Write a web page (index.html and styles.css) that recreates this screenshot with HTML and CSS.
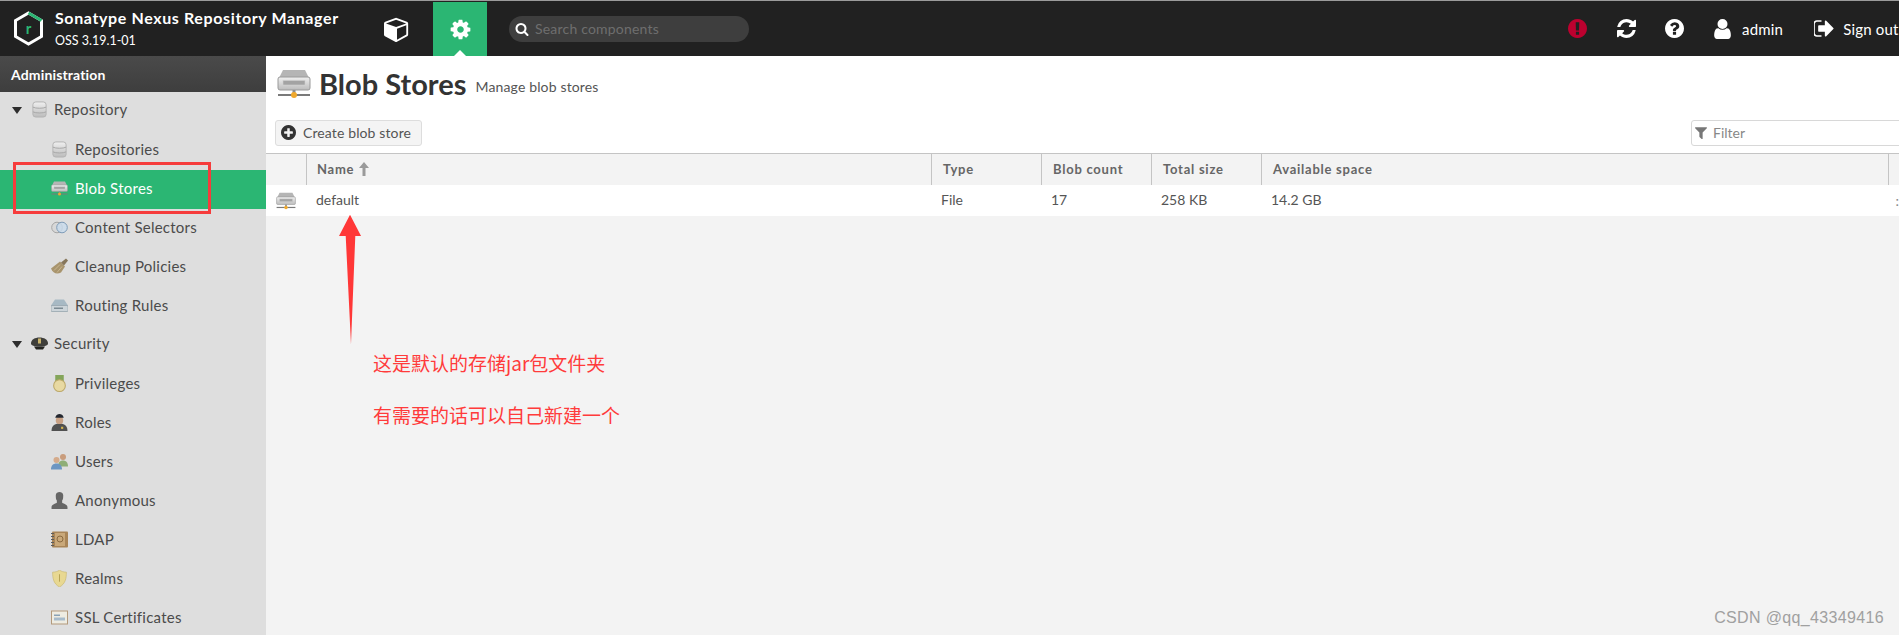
FILE: index.html
```html
<!DOCTYPE html>
<html lang="en">
<head>
<meta charset="utf-8">
<title>Blob Stores - Nexus Repository Manager</title>
<link rel="stylesheet" href="styles.css">
</head>
<body>
<svg class="defs" width="0" height="0" aria-hidden="true">
  <defs>
    <linearGradient id="silver" x1="0" y1="0" x2="0" y2="1"><stop offset="0" stop-color="#efefef"/><stop offset="1" stop-color="#bcbcbc"/></linearGradient>
    <symbol id="i-drive" viewBox="0 0 34 30">
      <path d="M6 1h22l4 8H2z" fill="#b5b5b5"/>
      <rect x="1" y="8" width="32" height="13" rx="2" fill="url(#silver)" stroke="#9a9a9a"/>
      <rect x="6" y="11.500" width="22" height="4.500" fill="#a3a3a3" stroke="#cfcfcf" stroke-width=".6"/>
      <rect x="15.500" y="21" width="3" height="5" fill="#8f8f8f"/>
      <rect x="1" y="25" width="32" height="2" fill="#7a7a7a"/>
      <circle cx="17" cy="26" r="3" fill="#f0a92e"/>
    </symbol>
    <symbol id="i-db" viewBox="0 0 16 18">
      <rect x="1" y="1" width="14" height="16" rx="3" fill="url(#silver)" stroke="#b2b2b2"/>
      <path d="M1 6.500c3 1.600 11 1.600 14 0M1 11.500c3 1.600 11 1.600 14 0" fill="none" stroke="#a5a5a5"/>
    </symbol>
    <symbol id="i-selector" viewBox="0 0 17 12">
      <circle cx="6" cy="6" r="5.300" fill="#d8d8d8" stroke="#a5a5a5"/>
      <circle cx="11" cy="6" r="5.300" fill="#c8dbec" fill-opacity=".8" stroke="#7f9cb8"/>
    </symbol>
    <symbol id="i-broom" viewBox="0 0 17 16">
      <path d="M0 10 L9 3 L14 8 L10 14 C6 16 2 15 0 10z" fill="#a8946d"/>
      <path d="M3 12 L9 6 M6 14 L11 8" stroke="#c9b68f" fill="none"/>
      <path d="M10 4 L15 0 L17 2 L13 7z" fill="#86765a"/>
    </symbol>
    <symbol id="i-router" viewBox="0 0 17 12">
      <path d="M4 0h9l4 6v5a1 1 0 0 1-1 1H1a1 1 0 0 1-1-1V6z" fill="#a7b9c4"/>
      <rect x="0" y="6" width="17" height="6" rx="1" fill="#ccd4d9" stroke="#8b9aa3" stroke-width=".6"/>
      <rect x="3" y="8" width="9" height="1.500" fill="#7b8a93"/>
    </symbol>
    <symbol id="i-cap" viewBox="0 0 17 12">
      <path d="M0 6c0-4 4-6 8.500-6S17 2 17 6c0 2-3 3-8.500 3S0 8 0 6z" fill="#3e3e3a"/>
      <rect x="7" y="1" width="3" height="5" fill="#c9b36b"/>
      <path d="M3 9h11l-2 3H5z" fill="#23231f"/>
    </symbol>
    <symbol id="i-medal" viewBox="0 0 12 16">
      <rect x="2" y="0" width="8" height="6" fill="#84a55a"/>
      <circle cx="6" cy="10" r="5.500" fill="#e8d9a2" stroke="#bda868"/>
    </symbol>
    <symbol id="i-officer" viewBox="0 0 15 16">
      <path d="M0 16c0-5 3-7 7.500-7S15 11 15 16z" fill="#505050"/>
      <circle cx="7.500" cy="6" r="3.500" fill="#c9a184"/>
      <path d="M3.500 3.500C4 1 6 0 7.500 0S11 1 11.500 3.500z" fill="#23272f"/>
      <rect x="9" y="12" width="2" height="2" fill="#d8b84d"/>
    </symbol>
    <symbol id="i-users" viewBox="0 0 17 16">
      <circle cx="12" cy="3.500" r="3" fill="#c99d7d"/>
      <path d="M7 13c0-4 2-6 5-6s5 2 5 6z" fill="#8eae77"/>
      <circle cx="5.500" cy="6.500" r="3" fill="#d5ab8b"/>
      <path d="M0 16c0-4 2-6 5.500-6S11 12 11 16z" fill="#6c96c2"/>
    </symbol>
    <symbol id="i-anon" viewBox="0 0 15 16">
      <path d="M0 16v-2c0-2 3-3 5-4V8C4 7 4 5 4 3c0-2 2-3 3.500-3S11 1 11 3c0 2 0 4-1 5v2c2 1 5 2 5 4v2z" fill="#666"/>
    </symbol>
    <symbol id="i-book" viewBox="0 0 17 16">
      <rect x="1" y="0" width="16" height="16" rx="1" fill="#a98557"/>
      <rect x="4" y="1.500" width="10" height="13" fill="#c9a879"/>
      <circle cx="9" cy="7.500" r="3" fill="none" stroke="#8a6a40"/>
      <path d="M0 2h3M0 5h3M0 8h3M0 11h3M0 14h3" stroke="#5d5d5d"/>
    </symbol>
    <symbol id="i-shield" viewBox="0 0 13 16">
      <path d="M6.500 0C8 1.500 11 2 13 2c0 6-1 11-6.500 14C1 13 0 8 0 2c2 0 5-.5 6.500-2z" fill="#e8d892" stroke="#c8b670" stroke-width=".6"/>
      <path d="M6.500 4v7" stroke="#b8a455"/>
    </symbol>
    <symbol id="i-cert" viewBox="0 0 17 14">
      <rect x=".5" y=".5" width="16" height="13" fill="#eeece2" stroke="#b39a7c"/>
      <rect x="3" y="4" width="6" height="1.500" fill="#8aa2b5"/>
      <rect x="3" y="7" width="11" height="3" fill="#a7bbcb"/>
    </symbol>
  </defs>
</svg>

<div class="topline"></div>
<header class="topbar">
  <div class="brand">
    <svg class="logo" viewBox="0 0 31 35" aria-hidden="true">
      <path d="M15.500 2 L28.500 9.500 V25.500 L15.500 33 L2.500 25.500 V9.500 Z" fill="none" stroke="#fff" stroke-width="3"/>
      <path d="M15.500 2 L28.500 9.500" fill="none" stroke="#2bb673" stroke-width="3"/>
      <text x="15.500" y="23" text-anchor="middle" class="logo-r">r</text>
    </svg>
    <div class="brand-text">
      <div class="brand-name">Sonatype Nexus Repository Manager</div>
      <div class="brand-version">OSS 3.19.1-01</div>
    </div>
  </div>
  <div class="nav-btn nav-browse">
    <svg class="ico-cube" viewBox="0 0 1792 1792"><path fill="#fff" d="M896 1629l640-349v-636l-640 233v752zm-64-864l698-254-698-254-698 254zm832-252v768q0 35-18 65t-49 47l-704 384q-28 16-61 16t-61-16l-704-384q-31-17-49-47t-18-65v-768q0-40 23-73t61-49l704-256q22-8 44-8t44 8l704 256q38 16 61 49t23 73z"/></svg>
  </div>
  <div class="nav-btn nav-active">
    <svg class="ico-gear" viewBox="0 0 1792 1792"><path fill="#fff" d="M1152 896q0-106-75-181t-181-75-181 75-75 181 75 181 181 75 181-75 75-181zm512-109v222q0 12-8 23t-20 13l-185 28q-19 54-39 91 35 50 107 138 10 12 10 25t-9 23q-27 37-99 108t-94 71q-12 0-26-9l-138-108q-44 23-91 38-16 136-29 186-7 28-36 28h-222q-14 0-24.500-8.500t-11.500-21.500l-28-184q-49-16-90-37l-141 107q-10 9-25 9-14 0-25-11-126-114-165-168-7-10-7-23 0-12 8-23 15-21 51-66.500t54-70.500q-27-50-41-99l-183-27q-13-2-21-12.500t-8-23.500v-222q0-12 8-23t19-13l186-28q14-46 39-92-40-57-107-138-10-12-10-24 0-10 9-23 26-36 98.500-107.500t94.500-71.500q13 0 26 10l138 107q44-23 91-38 16-136 29-186 7-28 36-28h222q14 0 24.500 8.500t11.500 21.500l28 184q49 16 90 37l142-107q9-9 24-9 13 0 25 10 129 119 165 170 7 8 7 22 0 12-8 23-15 21-51 66.500t-54 70.500q26 50 41 98l183 28q13 2 21 12.500t8 23.500z"/></svg>
  </div>
  <div class="search">
    <svg class="ico-search" viewBox="0 0 1792 1792"><path fill="#fff" d="M1216 832q0-185-131.500-316.500t-316.500-131.500-316.500 131.500-131.500 316.500 131.500 316.500 316.500 131.500 316.500-131.500 131.500-316.500zm512 832q0 52-38 90t-90 38q-54 0-90-38l-343-342q-179 124-399 124-143 0-273.500-55.500t-225-150-150-225-55.500-273.500 55.500-273.500 150-225 225-150 273.500-55.500 273.500 55.500 225 150 150 225 55.500 273.500q0 220-124 399l343 343q37 37 37 90z"/></svg>
    <span class="search-text">Search components</span>
  </div>
  <div class="top-actions">
    <svg class="ico-top" viewBox="128 128 1536 1536"><path fill="#bc012f" d="M896 128q209 0 385.500 103t279.500 279.500 103 385.500-103 385.500-279.500 279.500-385.500 103-385.500-103-279.500-279.500-103-385.500 103-385.500 279.500-279.500 385.500-103zm128 1247v-190q0-14-9-23.500t-22-9.500h-192q-13 0-23 10t-10 23v190q0 13 10 23t23 10h192q13 0 22-9.500t9-23.500zm-2-344l18-621q0-12-10-18-10-8-24-8h-220q-14 0-24 8-10 6-10 18l17 621q0 10 10 17.500t24 7.500h185q14 0 23.500-7.500t10.500-17.500z"/></svg>
    <svg class="ico-top" viewBox="0 0 1536 1536"><path fill="#fff" d="M1511 928q0 5-1 7-64 268-268 434.500t-478 166.500q-146 0-282.500-55t-243.500-157l-129 129q-19 19-45 19t-45-19-19-45v-448q0-26 19-45t45-19h448q26 0 45 19t19 45-19 45l-137 137q71 66 161 102t187 36q134 0 250-65t186-179q11-17 53-117 8-23 30-23h192q13 0 22.500 9.500t9.500 22.500zm25-800v448q0 26-19 45t-45 19h-448q-26 0-45-19t-19-45 19-45l138-138q-148-137-349-137-134 0-250 65t-186 179q-11 17-53 117-8 23-30 23h-199q-13 0-22.500-9.500t-9.500-22.500v-7q65-268 270-434.500t480-166.500q146 0 284 55.500t245 156.500l130-129q19-19 45-19t45 19 19 45z"/></svg>
    <svg class="ico-top" viewBox="128 128 1536 1536"><path fill="#fff" d="M1024 1376v-192q0-14-9-23t-23-9h-192q-14 0-23 9t-9 23v192q0 14 9 23t23 9h192q14 0 23-9t9-23zm256-672q0-88-55.500-163t-138.500-116-170-41q-243 0-371 213-15 24 8 42l132 100q7 6 19 6 16 0 25-12 53-68 86-92 34-24 86-24 48 0 85.500 26t37.500 59q0 38-20 61t-68 45q-63 28-115.500 86.500t-52.500 125.500v36q0 14 9 23t23 9h192q14 0 23-9t9-23q0-19 21.500-49.500t54.500-49.500q32-18 49-28.500t46-35 44.500-48 28-60.500 12.500-81zm384 192q0 209-103 385.500t-279.500 279.500-385.500 103-385.500-103-279.500-279.500-103-385.500 103-385.500 279.500-279.500 385.500-103 385.500 103 279.500 279.500 103 385.500z"/></svg>
    <div class="top-user">
      <svg class="ico-user" viewBox="256 128 1280 1536"><path fill="#fff" d="M1536 1399q0 109-62.500 187t-150.500 78h-854q-88 0-150.500-78t-62.500-187q0-85 8.500-160.500t31.500-152 58.500-131 94-89 134.500-34.500q131 128 313 128t313-128q76 0 134.500 34.500t94 89 58.500 131 31.500 152 8.500 160.500zm-256-887q0 159-112.500 271.500t-271.500 112.500-271.500-112.500-112.500-271.500 112.500-271.500 271.500-112.500 271.500 112.500 112.500 271.500z"/></svg>
      <span class="top-label">admin</span>
    </div>
    <div class="top-signout">
      <svg class="ico-signout" viewBox="128 256 1536 1280"><path fill="#fff" d="M704 1440q0 4 1 20t.5 26.500-3 23.500-10 19.500-20.500 6.500h-320q-119 0-203.500-84.500t-84.500-203.500v-704q0-119 84.500-203.500t203.500-84.500h320q13 0 22.500 9.500t9.500 22.500q0 4 1 20t.5 26.500-3 23.500-10 19.500-20.500 6.500h-320q-66 0-113 47t-47 113v704q0 66 47 113t113 47h312l11.500 1 11.500 3 8 5.500 7 9 2 13.500zm928-544q0 26-19 45l-544 544q-19 19-45 19t-45-19-19-45v-288h-448q-26 0-45-19t-19-45v-384q0-26 19-45t45-19h448v-288q0-26 19-45t45-19 45 19l544 544q19 19 19 45z"/></svg>
      <span class="top-label">Sign out</span>
    </div>
  </div>
</header>

<div class="main">
  <aside class="sidebar">
    <div class="side-title">Administration</div>
    <div class="side-row side-group"><span class="caret"></span><svg class="side-ico"><use href="#i-db"/></svg><span>Repository</span></div>
    <div class="side-row side-sub"><svg class="side-ico"><use href="#i-db"/></svg><span>Repositories</span></div>
    <div class="side-row side-sub side-active"><svg class="side-ico"><use href="#i-drive"/></svg><span>Blob Stores</span></div>
    <div class="side-row side-sub"><svg class="side-ico"><use href="#i-selector"/></svg><span>Content Selectors</span></div>
    <div class="side-row side-sub"><svg class="side-ico"><use href="#i-broom"/></svg><span>Cleanup Policies</span></div>
    <div class="side-row side-sub"><svg class="side-ico"><use href="#i-router"/></svg><span>Routing Rules</span></div>
    <div class="side-row side-group"><span class="caret"></span><svg class="side-ico"><use href="#i-cap"/></svg><span>Security</span></div>
    <div class="side-row side-sub"><svg class="side-ico"><use href="#i-medal"/></svg><span>Privileges</span></div>
    <div class="side-row side-sub"><svg class="side-ico"><use href="#i-officer"/></svg><span>Roles</span></div>
    <div class="side-row side-sub"><svg class="side-ico"><use href="#i-users"/></svg><span>Users</span></div>
    <div class="side-row side-sub"><svg class="side-ico"><use href="#i-anon"/></svg><span>Anonymous</span></div>
    <div class="side-row side-sub"><svg class="side-ico"><use href="#i-book"/></svg><span>LDAP</span></div>
    <div class="side-row side-sub"><svg class="side-ico"><use href="#i-shield"/></svg><span>Realms</span></div>
    <div class="side-row side-sub"><svg class="side-ico"><use href="#i-cert"/></svg><span>SSL Certificates</span></div>
  </aside>

  <main class="content">
    <div class="page-head">
      <div class="title-row">
        <svg class="title-ico"><use href="#i-drive"/></svg>
        <h1 class="title">Blob Stores</h1>
        <span class="subtitle">Manage blob stores</span>
      </div>
      <div class="toolbar">
        <div class="btn">
          <svg class="ico-plus" viewBox="128 128 1536 1536"><path fill="#333" d="M1344 960v-128q0-26-19-45t-45-19h-256v-256q0-26-19-45t-45-19h-128q-26 0-45 19t-19 45v256h-256q-26 0-45 19t-19 45v128q0 26 19 45t45 19h256v256q0 26 19 45t45 19h128q26 0 45-19t19-45v-256h256q26 0 45-19t19-45zm320-64q0 209-103 385.500t-279.500 279.500-385.500 103-385.500-103-279.500-279.500-103-385.500 103-385.500 279.500-279.500 385.500-103 385.500 103 279.500 279.500 103 385.500z"/></svg>
          <span>Create blob store</span>
        </div>
        <div class="filter">
          <svg class="ico-filter" viewBox="190 256 1412 1344"><path fill="#777" d="M1595 295q17 41-14 70l-493 493v742q0 42-39 59-13 5-25 5-27 0-45-19l-256-256q-19-19-19-45v-486l-493-493q-31-29-14-70 17-39 59-39h1280q42 0 59 39z"/></svg>
          <span>Filter</span>
        </div>
      </div>
    </div>
    <div class="grid-row grid-head">
      <div class="cell"></div>
      <div class="cell cell-sep cell-name">Name
        <svg class="ico-sort" viewBox="0 0 10 14"><path fill="#9a9a9a" d="M5 0l5 6H6.500v8h-3V6H0z"/></svg>
      </div>
      <div class="cell cell-sep">Type</div>
      <div class="cell cell-sep">Blob count</div>
      <div class="cell cell-sep">Total size</div>
      <div class="cell cell-sep">Available space</div>
      <div class="cell cell-sep"></div>
    </div>
    <div class="grid-row grid-body">
      <div class="cell cell-ico"><svg class="row-ico"><use href="#i-drive"/></svg></div>
      <div class="cell">default</div>
      <div class="cell">File</div>
      <div class="cell">17</div>
      <div class="cell">258 KB</div>
      <div class="cell">14.2 GB</div>
      <div class="cell cell-end">:</div>
    </div>
  </main>
</div>

<div class="mark-box"></div>
<svg class="mark-arrow" viewBox="0 0 24 137" aria-hidden="true"><path fill="#ff3737" d="M11.500 0L23 22h-6L12.500 135 7 22H0z"/></svg>
<div class="mark-text" lang="zh-CN">
  <p>这是默认的存储jar包文件夹</p>
  <p>有需要的话可以自己新建一个</p>
</div>
<div class="watermark">CSDN @qq_43349416</div>
</body>
</html>
```
FILE: styles.css
```css
* { box-sizing: border-box; }
html, body { margin: 0; height: 635px; overflow: hidden; }
body { position: relative; background: #f3f3f3; font-family: Lato, "Liberation Sans", sans-serif; color: #444; display: flex; flex-direction: column; }
.defs { position: absolute; }

.topline { height: 1px; background: #9b9b9b; flex: none; }
.topbar { height: 55px; flex: none; background: #212121; color: #fff; display: flex; align-items: stretch; overflow: hidden; }
.brand { width: 375px; flex: none; display: flex; align-items: center; padding-left: 13px; gap: 11px; }
.logo { width: 31px; height: 35px; flex: none; }
.logo-r { font: 700 15px Lato, sans-serif; fill: #2bb673; }
.brand-name { font-size: 16px; font-weight: 700; letter-spacing: .62px; line-height: 20px; white-space: nowrap; }
.brand-version { font-size: 12.5px; line-height: 18px; margin-top: 4px; white-space: nowrap; }
.nav-btn { width: 54px; flex: none; display: flex; align-items: center; justify-content: center; position: relative; }
.nav-browse { margin-left: -5px; margin-right: 9px; }
.nav-active { background: #2bb673; margin-top: 1px; }
.nav-active::after { content: ""; position: absolute; left: 50%; bottom: 0; margin-left: -6px; border: 6px solid transparent; border-top: 0; border-bottom-color: #fff; }
.ico-cube { width: 26px; height: 26px; }
.ico-gear { width: 23px; height: 23px; }
.search { width: 240px; height: 26px; align-self: center; margin-left: 22px; border-radius: 13px; background: #3e3e3e; display: flex; align-items: center; padding-left: 6px; gap: 6px; flex: none; }
.ico-search { width: 14px; height: 14px; }
.search-text { font-size: 14px; color: #6e6e6e; letter-spacing: .2px; }
.top-actions { margin-left: 819px; display: flex; align-items: center; gap: 29.5px; flex: none; }
.ico-top { width: 19px; height: 19px; flex: none; display: block; }
.top-user { display: flex; align-items: center; gap: 11.5px; }
.ico-user { width: 17px; height: 20px; flex: none; display: block; }
.top-signout { display: flex; align-items: center; gap: 9px; margin-left: 1.500px; }
.ico-signout { width: 20px; height: 17px; flex: none; }
.top-label { font-size: 15px; letter-spacing: .2px; white-space: nowrap; }

.main { flex: 1; min-height: 0; display: flex; }
.sidebar { width: 266px; flex: none; background: #dedede; overflow: hidden; }
.side-title { height: 36px; padding-left: 11px; display: flex; align-items: center; font-size: 14px; font-weight: 700; letter-spacing: .15px; color: #fff; background: linear-gradient(#4a4a4a, #3e3e3e); }
.side-row { height: 39px; padding-bottom: 3px; display: flex; align-items: center; font-size: 15px; letter-spacing: .25px; color: #4b4b4b; white-space: nowrap; }
.side-group { padding-left: 12px; padding-bottom: 5px; }
.side-group .side-ico { margin-left: 9px; margin-right: 6px; }
.side-sub { padding-left: 51px; }
.side-sub .side-ico { margin-right: 7px; }
.side-ico { width: 17px; height: 17px; flex: none; display: block; }
.side-active { background: #2bb673; color: #fff; }
.caret { width: 0; height: 0; border-left: 5px solid transparent; border-right: 5px solid transparent; border-top: 7px solid #2d2d2d; flex: none; margin-top: 2px; }

.content { flex: 1; min-width: 0; display: flex; flex-direction: column; overflow: hidden; }
.page-head { height: 97px; flex: none; background: #fff; padding: 10px 0 0 9px; }
.title-row { display: flex; align-items: center; height: 36px; }
.title-ico { width: 34px; height: 30px; flex: none; margin-left: 2px; }
.title { margin: 0 0 2px 8px; font-size: 29px; font-weight: 700; color: #333; line-height: 33px; white-space: nowrap; }
.subtitle { margin-left: 9px; margin-top: 4px; font-size: 14px; letter-spacing: .15px; color: #555; white-space: nowrap; }
.toolbar { display: flex; justify-content: space-between; margin-top: 18px; }
.btn { width: 147px; height: 26px; padding-bottom: 1px; border: 1px solid #ddd; border-radius: 3px; background: #f4f4f4; display: flex; align-items: center; padding-left: 5px; gap: 7px; font-size: 14px; letter-spacing: .12px; color: #555; flex: none; white-space: nowrap; }
.ico-plus { width: 15px; height: 15px; flex: none; }
.filter { width: 220px; height: 26px; padding-bottom: 1px; margin-left: auto; margin-right: -12px; border: 1px solid #d8d8d8; border-radius: 3px; background: #fff; display: flex; align-items: center; padding-left: 3px; gap: 6px; font-size: 14px; color: #888; flex: none; }
.ico-filter { width: 12px; height: 12px; flex: none; }

.grid-row { display: grid; grid-template-columns: 40px 625px 110px 110px 110px 627px 1fr; flex: none; }
.grid-head { height: 32px; background: #f3f3f3; border-top: 1px solid #c4c4c4; font-size: 13px; font-weight: 700; color: #666; letter-spacing: .75px; }
.grid-body { height: 31px; background: #fff; font-size: 14px; color: #555; }
.cell { display: flex; align-items: center; white-space: nowrap; min-width: 0; }
.grid-head .cell { padding: 0 0 2px 11px; }
.grid-head .cell-name { padding-left: 10px; }
.grid-body .cell { padding: 0 0 3px 10px; }
.cell-sep { border-left: 1px solid #c4c4c4; }
.grid-body .cell-ico { padding: 0 0 0 10px; }
.row-ico { width: 20px; height: 18px; display: block; }
.ico-sort { width: 10px; height: 14px; margin-left: 5px; }
.grid-body .cell-end { justify-content: flex-end; padding: 0; color: #888; }

.mark-box { position: absolute; left: 13px; top: 162px; width: 198px; height: 52px; border: 3px solid #f63c3c; }
.mark-arrow { position: absolute; left: 339px; top: 212px; width: 23px; height: 137px; }
.mark-text { position: absolute; left: 373px; top: 350px; font-family: "Noto Sans CJK SC", sans-serif; font-size: 19px; color: #ff3b3b; line-height: 26px; }
.mark-text p { margin: 0 0 25.500px; white-space: nowrap; }
.watermark { position: absolute; right: 15px; top: 609px; font-family: "Liberation Sans", sans-serif; font-size: 16px; letter-spacing: .35px; line-height: 18px; color: #a0a0a0; }
```
